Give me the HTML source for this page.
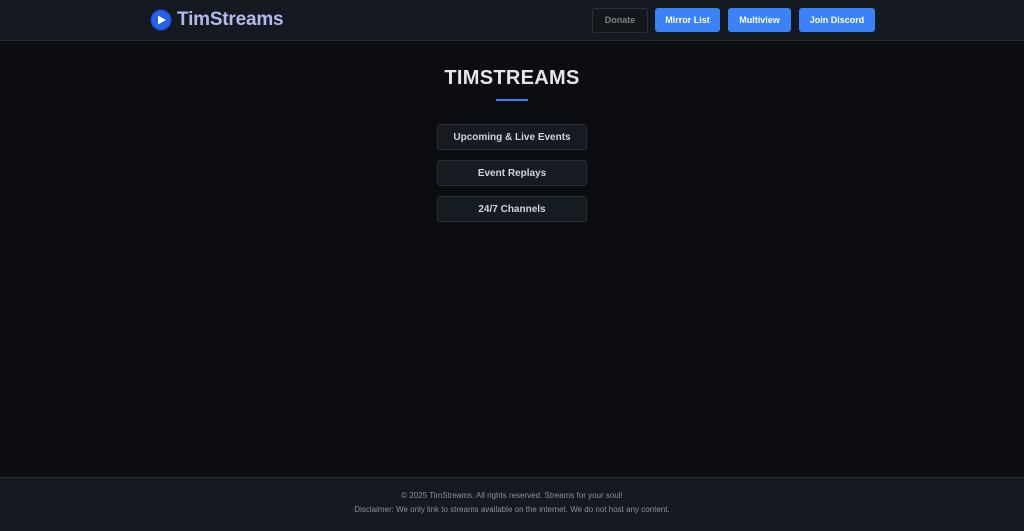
<!DOCTYPE html>
<html><head><style>
body{margin:0;width:1024px;height:530px;background:#0b0d11;font-family:"Liberation Sans",sans-serif;overflow:hidden;position:relative}
.hdr{position:absolute;top:0;left:0;width:1024px;height:40px;background:#151920;border-bottom:1px solid #262b33}
.logo{position:absolute;left:150px;top:9px;display:flex;align-items:center}
.logo span{font-weight:bold;font-size:19px;color:#b3b9ec;margin-left:5px;letter-spacing:-0.2px}
.btn{position:absolute;top:8px;height:24px;border-radius:3px;font-size:9px;font-weight:bold;color:#fff;background:#3b82f6;text-align:center;line-height:24px}
.don{background:#14171c;border:1px solid #2b3038;color:#7b818a;height:23px;line-height:23px}
h1{position:absolute;top:67px;left:0;width:1024px;text-align:center;margin:0;font-size:20px;color:#e5e7eb;letter-spacing:0.3px}
.bar{position:absolute;left:496px;top:99px;width:32px;height:2px;background:#3b82f6}
.item{position:absolute;left:437px;width:148px;height:24px;border:1px solid #2a2f37;border-radius:3px;background:#161a21;color:#d1d5db;font-size:10px;font-weight:bold;text-align:center;line-height:26px}
.ftr{position:absolute;top:477px;left:0;width:1024px;height:53px;background:#151920;border-top:1px solid #262b33;color:#8b9099;font-size:8px;text-align:center}
</style></head><body>
<div class="hdr">
<div class="logo"><svg width="22" height="22" viewBox="0 0 22 22"><circle cx="11" cy="11" r="10.5" fill="#1d4ed8"/><circle cx="11" cy="11" r="9" fill="#2563eb"/><path d="M8 6.5 L16 11 L8 15.5Z" fill="#fff"/></svg><span>TimStreams</span></div>
<div class="btn don" style="left:592px;width:54px">Donate</div>
<div class="btn" style="left:655px;width:65px">Mirror List</div>
<div class="btn" style="left:728px;width:63px">Multiview</div>
<div class="btn" style="left:799px;width:76px">Join Discord</div>
</div>
<h1>TIMSTREAMS</h1>
<div class="bar"></div>
<div class="item" style="top:124px">Upcoming &amp; Live Events</div>
<div class="item" style="top:160px">Event Replays</div>
<div class="item" style="top:196px">24/7 Channels</div>
<div class="ftr"><div style="margin-top:13px">© 2025 TimStreams. All rights reserved. Streams for your soul!</div><div style="margin-top:5px">Disclaimer: We only link to streams available on the internet. We do not host any content.</div></div>
</body></html>
